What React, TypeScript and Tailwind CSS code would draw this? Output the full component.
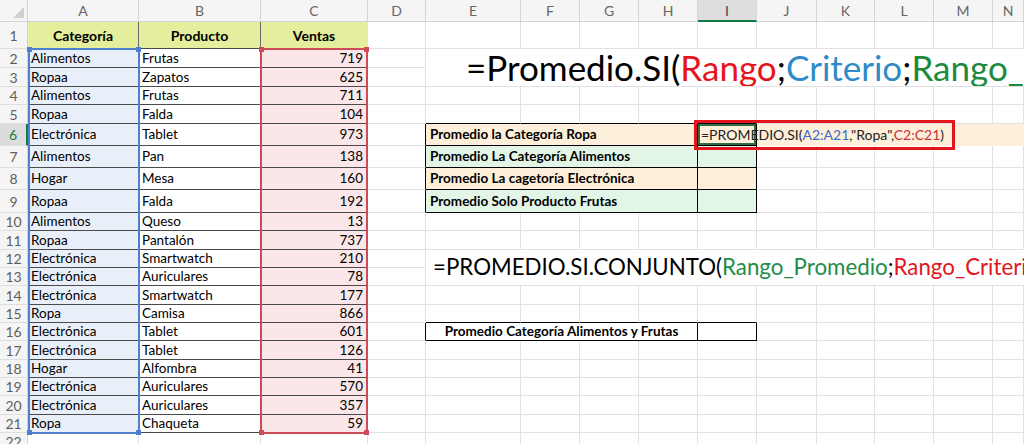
import clsx from "clsx";

const colLetters = ["A", "B", "C", "D", "E", "F", "G", "H", "I", "J", "K", "L", "M", "N"];

const ventas: [string, string, number][] = [
  ["Alimentos", "Frutas", 719],
  ["Ropaa", "Zapatos", 625],
  ["Alimentos", "Frutas", 711],
  ["Ropaa", "Falda", 104],
  ["Electrónica", "Tablet", 973],
  ["Alimentos", "Pan", 138],
  ["Hogar", "Mesa", 160],
  ["Ropaa", "Falda", 192],
  ["Alimentos", "Queso", 13],
  ["Ropaa", "Pantalón", 737],
  ["Electrónica", "Smartwatch", 210],
  ["Electrónica", "Auriculares", 78],
  ["Electrónica", "Smartwatch", 177],
  ["Ropa", "Camisa", 866],
  ["Electrónica", "Tablet", 601],
  ["Electrónica", "Tablet", 126],
  ["Hogar", "Alfombra", 41],
  ["Electrónica", "Auriculares", 570],
  ["Electrónica", "Auriculares", 357],
  ["Ropa", "Chaqueta", 59],
];

const promedios: Record<number, { label: string; peach: boolean }> = {
  6: { label: "Promedio la Categoría Ropa", peach: true },
  7: { label: "Promedio La Categoría Alimentos", peach: false },
  8: { label: "Promedio La cagetoría Electrónica", peach: true },
  9: { label: "Promedio Solo Producto Frutas", peach: false },
};

// empty cell with the sheet gridlines, black where the right-hand tables start
function Plain({ r, c }: { r: number; c: number }) {
  const top = (r === 5 || r === 15) && c >= 5 && c <= 9;
  const left = c === 4 && ((r >= 6 && r <= 9) || r === 16);
  const filled = r === 6 && c >= 10;
  return (
    <div
      className={clsx(
        "border-r border-b",
        top ? "border-b-black" : filled ? "border-b-[#fdefd9]" : "border-b-[#e1e1e1]",
        left ? "border-r-black" : filled ? "border-r-[#fdefd9]" : "border-r-[#e1e1e1]",
        filled && "bg-[#fdefd9]"
      )}
    />
  );
}

function RowHeader({ r }: { r: number }) {
  return (
    <div
      className={clsx(
        "flex items-center justify-center border-b border-b-[#dedede] text-[14px]",
        r === 6
          ? "bg-[#dcdcdc] text-[#107c41] border-r-2 border-r-[#107c41]"
          : "bg-[#f5f5f5] text-[#5f5f5f] border-r border-r-[#d4d4d4]"
      )}
    >
      {r}
    </div>
  );
}

function Corner({ color }: { color: string }) {
  return (
    <>
      <div className={clsx("absolute -left-[3px] -top-[3px] w-[5px] h-[5px]", color)} />
      <div className={clsx("absolute -right-[3px] -top-[3px] w-[5px] h-[5px]", color)} />
      <div className={clsx("absolute -left-[3px] -bottom-[3px] w-[5px] h-[5px]", color)} />
      <div className={clsx("absolute -right-[3px] -bottom-[3px] w-[5px] h-[5px]", color)} />
    </>
  );
}

export default function App() {
  const cells: React.ReactNode[] = [];

  // column letters
  cells.push(
    <div key="corner" className="relative bg-[#f5f5f5] border-r border-b border-[#d4d4d4]">
      <svg className="absolute right-[3px] bottom-[3px]" width="11" height="11" viewBox="0 0 11 11">
        <polygon points="11,0 11,11 0,11" fill="#cfcfcf" />
      </svg>
    </div>
  );
  colLetters.forEach((l) =>
    cells.push(
      <div
        key={"h" + l}
        className={clsx(
          "flex items-center justify-center text-[14px] border-r border-r-[#d4d4d4]",
          l === "I"
            ? "bg-[#dedede] text-[#444] border-b-2 border-b-[#107c41]"
            : "bg-[#f5f5f5] text-[#666] border-b border-b-[#d4d4d4]"
        )}
      >
        {l}
      </div>
    )
  );

  for (let r = 1; r <= 22; r++) {
    cells.push(<RowHeader key={"rh" + r} r={r} />);

    // A..C
    if (r === 1) {
      ["Categoría", "Producto", "Ventas"].forEach((t, i) =>
        cells.push(
          <div
            key={"t" + i}
            className={clsx(
              "flex items-center justify-center bg-[#e4ee9d] font-bold text-[14px] text-black border-b border-b-[#4a4a4a] border-r",
              i === 2 ? "border-r-[#e1e1e1]" : "border-r-[#6b6b6b]"
            )}
          >
            {t}
          </div>
        )
      );
    } else if (r <= 21) {
      const [cat, prod, v] = ventas[r - 2];
      cells.push(
        <div key={"a" + r} className="flex items-center px-[3px] bg-[#e9eff9] text-[13.5px] text-black border-b border-r border-[#4a4a4a]">
          {cat}
        </div>,
        <div key={"b" + r} className="flex items-center px-[3px] bg-white text-[13.5px] text-black border-b border-r border-[#4a4a4a]">
          {prod}
        </div>,
        <div key={"c" + r} className="flex items-center justify-end px-[4px] bg-[#fbe7e9] text-[13.5px] text-black border-b border-r border-[#4a4a4a]">
          {v}
        </div>
      );
    } else {
      for (let c = 1; c <= 3; c++) cells.push(<Plain key={r + "-" + c} r={r} c={c} />);
    }

    // D
    cells.push(<Plain key={r + "-4"} r={r} c={4} />);

    // E..N
    if (r === 2) {
      cells.push(
        <div key="f1" className="col-span-10 row-span-2 flex items-center pl-[40px] bg-white border-b border-[#e1e1e1] overflow-hidden whitespace-nowrap text-[35px] leading-none text-black">
          =Promedio.SI(<span className="text-[#e8141c]">Rango</span>;
          <span className="text-[#2e8bc7]">Criterio</span>;
          <span className="text-[#1c8a3d]">Rango_Promedio</span>)
        </div>
      );
    } else if (r === 3 || r === 13) {
      // covered by merged formula cell
    } else if (r >= 6 && r <= 9) {
      const p = promedios[r];
      cells.push(
        <div
          key={"pl" + r}
          className={clsx(
            "col-span-4 flex items-center pl-[4px] font-bold text-[13.5px] text-black border-r border-b border-black",
            p.peach ? "bg-[#fdefd9]" : "bg-[#e2f5e7]"
          )}
        >
          {p.label}
        </div>
      );
      if (r === 6) {
        cells.push(
          <div key="i6" className="relative z-10 flex items-center pl-[3px] bg-[#fdefd9] border-r border-b border-black whitespace-nowrap text-[14px] text-[#222]">
            <div className="absolute inset-0 border-2 border-[#2f6d47]" />
            <span className="relative">
              =PROMEDIO.SI(<span className="text-[#3a6dc4]">A2:A21</span>,"Ropa",
              <span className="text-[#c9313a]">C2:C21</span>)
            </span>
            <span className="relative ml-px inline-block w-px h-[15px] bg-black" />
            <div className="absolute -left-[4px] -top-[4px] w-[261px] h-[30px] border-[3px] border-[#e3141c]" />
          </div>
        );
      } else {
        cells.push(
          <div
            key={"pi" + r}
            className={clsx("border-r border-b border-black", p.peach ? "bg-[#fdefd9]" : "bg-[#e2f5e7]")}
          />
        );
      }
      for (let c = 10; c <= 14; c++) cells.push(<Plain key={r + "-" + c} r={r} c={c} />);
    } else if (r === 12) {
      cells.push(
        <div key="f2" className="col-span-10 row-span-2 flex items-center pl-[7px] bg-white border-b border-[#e1e1e1] overflow-hidden whitespace-nowrap text-[22.3px] leading-none text-black">
          =PROMEDIO.SI.CONJUNTO(<span className="text-[#1f8c47]">Rango_Promedio</span>;
          <span className="text-[#e3161d]">Rango_Criterios1</span>;Criterio1)
        </div>
      );
    } else if (r === 16) {
      cells.push(
        <div key="cj" className="col-span-4 flex items-center justify-center font-bold text-[13.5px] text-black border-r border-b border-black">
          Promedio Categoría Alimentos y Frutas
        </div>,
        <div key="cji" className="border-r border-b border-black" />
      );
      for (let c = 10; c <= 14; c++) cells.push(<Plain key={r + "-" + c} r={r} c={c} />);
    } else {
      for (let c = 5; c <= 14; c++) cells.push(<Plain key={r + "-" + c} r={r} c={c} />);
    }
  }

  return (
    <div className="w-[1024px] h-[444px] overflow-hidden bg-white font-[Lato,sans-serif]">
      <div className="relative grid grid-cols-[28px_111px_122px_107px_58px_95px_59px_59px_59px_59px_60px_58px_59px_59px_1fr] grid-rows-[22px_27px_19px_19px_18px_19px_22px_22px_22px_23px_18px_19px_18px_18px_19px_18px_18px_19px_18px_18px_19px_18px_18px]">
        {cells}

        {/* formula reference highlights */}
        <div className="absolute left-[28px] top-[48px] w-[112px] h-[386px] border-2 border-[#4f7fcf] pointer-events-none">
          <Corner color="bg-[#4f7fcf]" />
        </div>
        <div className="absolute left-[260px] top-[48px] w-[108px] h-[386px] border-2 border-[#cf4c56] pointer-events-none">
          <Corner color="bg-[#cf4c56]" />
        </div>
      </div>
    </div>
  );
}
